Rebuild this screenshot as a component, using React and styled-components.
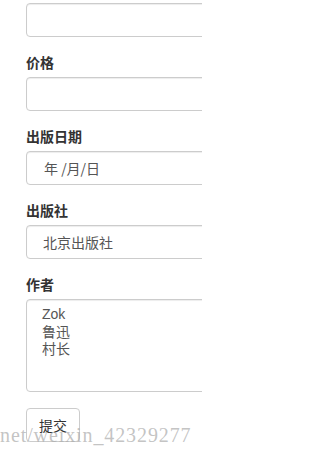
import React from "react";
import styled, { createGlobalStyle } from "styled-components";

const Global = createGlobalStyle`
  html, body { margin: 0; padding: 0; background: #fff; overflow: hidden; }
  body { font-family: "Liberation Sans", "Noto Sans CJK SC", sans-serif; font-size: 14px; color: #333; }
`;

const Page = styled.div`
  position: relative;
  width: 202px;
  height: 454px;
  overflow: hidden;
`;

const Form = styled.form`
  width: 300px;
  padding: 3px 0 0 26px;
  box-sizing: border-box;
  display: flex;
  flex-direction: column;
  gap: 15px;
`;

const Group = styled.div`
  display: flex;
  flex-direction: column;
  gap: 5px;
`;

const Label = styled.div`
  font-family: "Noto Sans CJK SC", sans-serif;
  font-weight: 700;
  font-size: 14px;
  line-height: 20px;
  height: 20px;
  color: #333;
`;

const Field = styled.div`
  box-sizing: border-box;
  height: ${(p) => p.$h || 34}px;
  border: 1px solid #ccc;
  border-radius: 4px;
  background: #fff;
  box-shadow: inset 0 1px 1px rgba(0, 0, 0, 0.075);
  padding: ${(p) => p.$pad || "0 12px"};
  display: flex;
  flex-direction: ${(p) => (p.$list ? "column" : "row")};
  align-items: ${(p) => (p.$list ? "flex-start" : "center")};
  font-family: "Noto Sans CJK SC", sans-serif;
  font-size: 14px;
  color: #555;
`;

const Option = styled.div`
  line-height: 17.5px;
  height: 17.5px;
  font-family: "Liberation Sans", "Noto Sans CJK SC", sans-serif;
`;

const Button = styled.button`
  align-self: flex-start;
  box-sizing: border-box;
  width: 54px;
  height: 34px;
  margin-top: 1px;
  padding: 0;
  border: 1px solid #ccc;
  border-radius: 4px;
  background: #fff;
  color: #333;
  font-family: "Noto Sans CJK SC", sans-serif;
  font-size: 14px;
`;

const Watermark = styled.div`
  position: absolute;
  left: 0;
  top: 425px;
  font-family: "Liberation Serif", serif;
  font-size: 20px;
  line-height: 20px;
  letter-spacing: 0.9px;
  color: rgba(170, 170, 170, 0.7);
  white-space: nowrap;
  pointer-events: none;
`;

export default function App() {
  return (
    <Page>
      <Global />
      <Form>
        <Field />
        <Group>
          <Label>价格</Label>
          <Field />
        </Group>
        <Group>
          <Label>出版日期</Label>
          <Field $pad="0 0 0 17px">年 /月/日</Field>
        </Group>
        <Group>
          <Label>出版社</Label>
          <Field $pad="0 0 0 16px">北京出版社</Field>
        </Group>
        <Group>
          <Label>作者</Label>
          <Field $h={93} $list $pad="6px 0 0 15px">
            <Option>Zok</Option>
            <Option>鲁迅</Option>
            <Option>村长</Option>
          </Field>
        </Group>
        <Button type="button">提交</Button>
      </Form>
      <Watermark>net/weixin_42329277</Watermark>
    </Page>
  );
}
